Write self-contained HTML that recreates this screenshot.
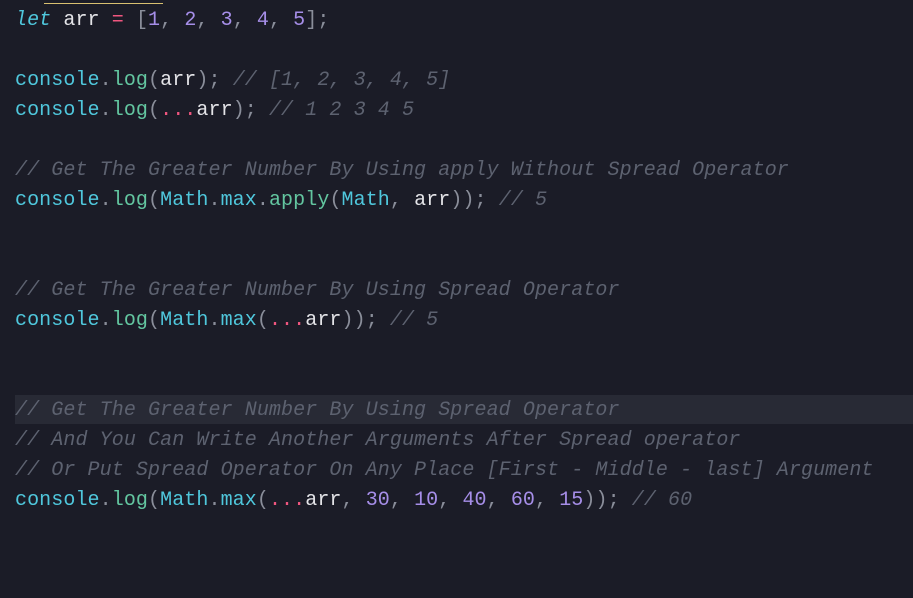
<html><head><style>
body{margin:0;background:#1b1c27;width:913px;height:598px;overflow:hidden;position:relative}
.l{position:absolute;left:15px;height:30px;line-height:30px;font-family:"Liberation Mono",monospace;font-size:20px;letter-spacing:0.09px;white-space:pre;color:#e4e4e8}
.c{color:#5d6270;font-style:italic}.k{color:#4fc7dc;font-style:italic}.f{color:#4fc7dc}.g{color:#63c6a0}.n{color:#a68ee8}.p{color:#8a8e9a}.o{color:#f0567f}.m{color:#4fc7dc}
</style></head><body>
<div style="position:absolute;left:44px;top:3px;width:119px;height:1px;background:#d8c070"></div>
<div style="position:absolute;left:15px;top:395px;width:898px;height:29px;background:#282a35"></div>
<div class="l" style="top:6px"><span class="k">let</span> arr <span class="o">=</span> <span class="p">[</span><span class="n">1</span><span class="p">,</span> <span class="n">2</span><span class="p">,</span> <span class="n">3</span><span class="p">,</span> <span class="n">4</span><span class="p">,</span> <span class="n">5</span><span class="p">];</span></div>
<div class="l" style="top:66px"><span class="f">console</span><span class="p">.</span><span class="g">log</span><span class="p">(</span>arr<span class="p">);</span> <span class="c">// [1, 2, 3, 4, 5]</span></div>
<div class="l" style="top:96px"><span class="f">console</span><span class="p">.</span><span class="g">log</span><span class="p">(</span><span class="o">...</span>arr<span class="p">);</span> <span class="c">// 1 2 3 4 5</span></div>
<div class="l c" style="top:156px">// Get The Greater Number By Using apply Without Spread Operator</div>
<div class="l" style="top:186px"><span class="f">console</span><span class="p">.</span><span class="g">log</span><span class="p">(</span><span class="m">Math</span><span class="p">.</span><span class="m">max</span><span class="p">.</span><span class="g">apply</span><span class="p">(</span><span class="m">Math</span><span class="p">,</span> arr<span class="p">));</span> <span class="c">// 5</span></div>
<div class="l c" style="top:276px">// Get The Greater Number By Using Spread Operator</div>
<div class="l" style="top:306px"><span class="f">console</span><span class="p">.</span><span class="g">log</span><span class="p">(</span><span class="m">Math</span><span class="p">.</span><span class="m">max</span><span class="p">(</span><span class="o">...</span>arr<span class="p">));</span> <span class="c">// 5</span></div>
<div class="l c" style="top:396px">// Get The Greater Number By Using Spread Operator</div>
<div class="l c" style="top:426px">// And You Can Write Another Arguments After Spread operator</div>
<div class="l c" style="top:456px">// Or Put Spread Operator On Any Place [First - Middle - last] Argument</div>
<div class="l" style="top:486px"><span class="f">console</span><span class="p">.</span><span class="g">log</span><span class="p">(</span><span class="m">Math</span><span class="p">.</span><span class="m">max</span><span class="p">(</span><span class="o">...</span>arr<span class="p">,</span> <span class="n">30</span><span class="p">,</span> <span class="n">10</span><span class="p">,</span> <span class="n">40</span><span class="p">,</span> <span class="n">60</span><span class="p">,</span> <span class="n">15</span><span class="p">));</span> <span class="c">// 60</span></div>
</body></html>
